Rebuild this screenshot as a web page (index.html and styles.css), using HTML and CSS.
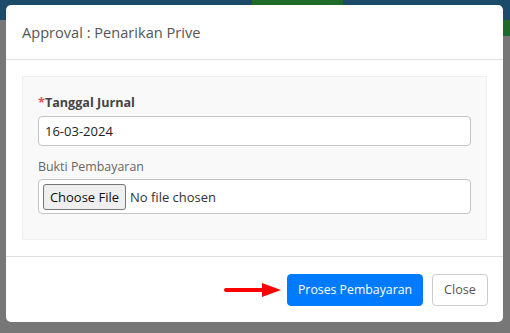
FILE: index.html
```html
<!DOCTYPE html>
<html>
<head>
<meta charset="utf-8">
<link rel="stylesheet" href="styles.css">
</head>
<body>
<div class="page">
  <div class="navbar">
    <span class="nav-item"></span>
    <span class="nav-item"></span>
    <span class="nav-item"></span>
    <span class="nav-item active"></span>
    <span class="nav-item"></span>
    <span class="nav-item"></span>
  </div>
  <div class="backdrop">
    <div class="side-green"></div>
  </div>
</div>

<div class="modal">
  <div class="modal-header">
    <h4 class="modal-title">Approval : Penarikan Prive</h4>
  </div>
  <div class="modal-body">
    <div class="panel">
      <div class="form-group">
        <label class="label-bold"><span class="req">*</span>Tanggal Jurnal</label>
        <div class="input">16-03-2024</div>
      </div>
      <div class="form-group">
        <label class="label-normal">Bukti Pembayaran</label>
        <div class="input file-input">
          <span class="file-btn">Choose File</span>
          <span class="file-text">No file chosen</span>
        </div>
      </div>
    </div>
  </div>
  <div class="modal-footer">
    <svg class="arrow" width="58" height="16" viewBox="0 0 58 16">
      <line x1="2" y1="8" x2="42" y2="8" stroke="#ff0000" stroke-width="4" stroke-linecap="round"/>
      <polygon points="38,1 57,8 38,15" fill="#ff0000"/>
    </svg>
    <button class="btn btn-primary">Proses Pembayaran</button>
    <button class="btn btn-default">Close</button>
  </div>
</div>
</body>
</html>
```

FILE: styles.css
```css
* { box-sizing: border-box; }
html, body { margin: 0; padding: 0; }
body {
  width: 510px;
  height: 333px;
  overflow: hidden;
  background: #777777;
  font-family: "Open Sans", "Noto Sans", sans-serif;
}
.page { height: 333px; display: flex; flex-direction: column; }
.navbar {
  height: 20px;
  background: #1c4a69;
  display: flex;
}
.nav-item { width: 85px; }
.nav-item.active { background: #1f6a28; width: 92px; margin-left: 1px; }
.backdrop { flex: 1; background: #777777; position: relative; }
.side-green { position: absolute; right: 0; top: 0; width: 8px; height: 16px; background: #1f6a28; }

.modal {
  position: fixed;
  left: 6px;
  top: 5px;
  width: 497px;
  height: 317px;
  background: #fff;
  border-radius: 5px;
  display: flex;
  flex-direction: column;
}
.modal-header {
  height: 55px;
  padding: 0 16px;
  display: flex;
  align-items: center;
  border-bottom: 1px solid #e0e0e0;
}
.modal-title {
  margin: 0;
  font-size: 14.6px;
  font-weight: 400;
  color: #555;
}
.modal-body {
  padding: 16px;
  border-bottom: 1px solid #e0e0e0;
}
.panel {
  background: #f9f9f9;
  border: 1px solid #efefef;
  height: 164px;
  padding: 16px 15px 0 15px;
}
.form-group { display: flex; flex-direction: column; }
.form-group + .form-group { margin-top: 12px; }
.label-bold {
  font-size: 12.6px;
  font-weight: 700;
  color: #444;
  line-height: 20px;
  margin-bottom: 3px;
}
.req { color: #d9534f; }
.label-normal {
  font-size: 12.4px;
  color: #666;
  line-height: 18px;
  margin-bottom: 3px;
}
.input {
  height: 30px;
  border: 1px solid #c4c4c4;
  border-radius: 4px;
  background: #fff;
  font-size: 13px;
  color: #222;
  padding: 0 6px;
  display: flex;
  align-items: center;
}
.file-input { height: 35px; padding: 0 4px; gap: 4px; }
.file-btn {
  height: 26px;
  width: 83px;
  border: 1px solid #767676;
  border-radius: 3px;
  background: #efefef;
  font-size: 13px;
  color: #111;
  display: flex;
  align-items: center;
  justify-content: center;
}
.file-text { font-size: 13px; color: #333; }
.modal-footer {
  flex: 1;
  display: flex;
  align-items: center;
  justify-content: flex-end;
  padding: 0 15px 0 0;
}
.arrow { margin-right: 5px; }
.btn {
  height: 32px;
  border-radius: 4px;
  font-family: "Open Sans", "Noto Sans", sans-serif;
  font-size: 12.3px;
  padding: 0;
  white-space: nowrap;
  cursor: pointer;
}
.btn-primary {
  background: #007bff;
  border: 1px solid #007bff;
  color: #fff;
  width: 136px;
}
.btn-default {
  background: #fff;
  border: 1px solid #ccc;
  color: #555;
  width: 56px;
  margin-left: 9px;
  font-size: 12.6px;
}
```
